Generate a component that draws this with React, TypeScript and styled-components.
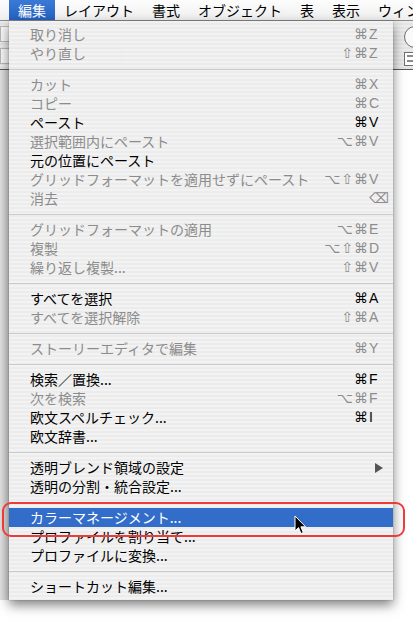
import React from 'react';
import styled, { createGlobalStyle } from 'styled-components';

const GlobalStyle = createGlobalStyle`
    html, body {
        margin: 0;
        padding: 0;
        background: #ffffff;
    }
    body {
        font-family: 'Noto Sans CJK JP', 'Noto Sans', sans-serif;
    }
`;

type Entry =
    | 'sep'
    | {
          label: string;
          mods?: string;
          keyName?: string;
          disabled?: boolean;
          submenu?: boolean;
          active?: boolean;
      };

const menuTitles = ['編集', 'レイアウト', '書式', 'オブジェクト', '表', '表示', 'ウィンドウ'];

const entries: Entry[] = [
    { label: '取り消し', mods: '⌘', keyName: 'Z', disabled: true },
    { label: 'やり直し', mods: '⇧⌘', keyName: 'Z', disabled: true },
    'sep',
    { label: 'カット', mods: '⌘', keyName: 'X', disabled: true },
    { label: 'コピー', mods: '⌘', keyName: 'C', disabled: true },
    { label: 'ペースト', mods: '⌘', keyName: 'V' },
    { label: '選択範囲内にペースト', mods: '⌥⌘', keyName: 'V', disabled: true },
    { label: '元の位置にペースト' },
    { label: 'グリッドフォーマットを適用せずにペースト', mods: '⌥⇧⌘', keyName: 'V', disabled: true },
    { label: '消去', keyName: '⌫', disabled: true },
    'sep',
    { label: 'グリッドフォーマットの適用', mods: '⌥⌘', keyName: 'E', disabled: true },
    { label: '複製', mods: '⌥⇧⌘', keyName: 'D', disabled: true },
    { label: '繰り返し複製...', mods: '⇧⌘', keyName: 'V', disabled: true },
    'sep',
    { label: 'すべてを選択', mods: '⌘', keyName: 'A' },
    { label: 'すべてを選択解除', mods: '⇧⌘', keyName: 'A', disabled: true },
    'sep',
    { label: 'ストーリーエディタで編集', mods: '⌘', keyName: 'Y', disabled: true },
    'sep',
    { label: '検索／置換...', mods: '⌘', keyName: 'F' },
    { label: '次を検索', mods: '⌥⌘', keyName: 'F', disabled: true },
    { label: '欧文スペルチェック...', mods: '⌘', keyName: 'I' },
    { label: '欧文辞書...' },
    'sep',
    { label: '透明ブレンド領域の設定', submenu: true },
    { label: '透明の分割・統合設定...' },
    'sep',
    { label: 'カラーマネージメント...', active: true },
    { label: 'プロファイルを割り当て...' },
    { label: 'プロファイルに変換...' },
    'sep',
    { label: 'ショートカット編集...' },
];

export default function App() {
    return (
        <>
            <GlobalStyle />
            <StyledScreen>
                <StyledMenuBar>
                    {menuTitles.map((title, i) => (
                        <StyledMenuTitle key={title} $open={i === 0}>
                            {title}
                        </StyledMenuTitle>
                    ))}
                </StyledMenuBar>

                <StyledToolbar>
                    <StyledToolGroup>
                        <StyledField />
                        <StyledField />
                    </StyledToolGroup>
                    <StyledToolEdge>
                        <StyledRoundButton />
                        <StyledGridButton>
                            <span />
                            <span />
                        </StyledGridButton>
                    </StyledToolEdge>
                </StyledToolbar>

                <StyledWorkspace>
                    <StyledGutter />
                    <StyledCanvas />
                </StyledWorkspace>

                <StyledDropdown>
                    {entries.map((entry, i) =>
                        entry === 'sep' ? (
                            <StyledSeparator key={i} />
                        ) : (
                            <StyledItem key={i} $disabled={entry.disabled} $active={entry.active}>
                                <StyledLabel>{entry.label}</StyledLabel>
                                {entry.keyName && (
                                    <StyledShortcut>
                                        <StyledMods>{entry.mods}</StyledMods>
                                        <StyledKey $wide={entry.keyName === '⌫'}>{entry.keyName}</StyledKey>
                                    </StyledShortcut>
                                )}
                                {entry.submenu && (
                                    <StyledArrow viewBox="0 0 8 10">
                                        <path d="M0 0 L8 5 L0 10 Z" />
                                    </StyledArrow>
                                )}
                            </StyledItem>
                        )
                    )}
                </StyledDropdown>

                <StyledFocusRing />

                <StyledCursor viewBox="0 0 13 20">
                    <path
                        d="M1 1 L1 16 L4.5 12.6 L7 18.5 L9.3 17.5 L6.9 11.8 L11.6 11.8 Z"
                        fill="#000"
                        stroke="#fff"
                        strokeWidth="1"
                        strokeLinejoin="round"
                    />
                </StyledCursor>
            </StyledScreen>
        </>
    );
}

const StyledScreen = styled.div`
    position: relative;
    display: flex;
    flex-direction: column;
    width: 413px;
    height: 622px;
    overflow: hidden;
    background: #ffffff;
`;

const StyledMenuBar = styled.div`
    display: flex;
    align-items: stretch;
    height: 20px;
    padding-left: 9px;
    background: linear-gradient(#fdfdfd, #efefef);
    border-bottom: 1px solid #8c8c8c;
    white-space: nowrap;
`;

const StyledMenuTitle = styled.div<{ $open?: boolean }>`
    display: flex;
    align-items: center;
    flex: none;
    padding: 0 9px;
    font-size: 14px;
    line-height: 20px;
    color: ${({ $open }) => ($open ? '#ffffff' : '#000000')};
    background: ${({ $open }) => ($open ? 'linear-gradient(#3a7ad6, #2461c2)' : 'transparent')};
`;

const StyledToolbar = styled.div`
    display: flex;
    justify-content: space-between;
    height: 48px;
    background: repeating-linear-gradient(#ececec 0 2px, #e4e4e4 2px 4px);
    border-bottom: 1px solid #5a5a5a;
`;

const StyledToolGroup = styled.div`
    display: flex;
    flex-direction: column;
    gap: 6px;
    padding: 5px 0 0 0;
`;

const StyledField = styled.div`
    width: 120px;
    height: 14px;
    border: 1px solid #b8b8b8;
    background: #f8f8f8;
`;

const StyledToolEdge = styled.div`
    display: flex;
    flex-direction: column;
    align-items: flex-start;
    gap: 4px;
    width: 9px;
    padding-top: 5px;
    overflow: hidden;
`;

const StyledRoundButton = styled.div`
    flex: none;
    width: 20px;
    height: 20px;
    border: 1px solid #6e6e6e;
    border-radius: 50%;
    background: #fafafa;
`;

const StyledGridButton = styled.div`
    flex: none;
    display: flex;
    flex-direction: column;
    gap: 3px;
    width: 12px;
    height: 14px;
    padding: 2px;
    box-sizing: border-box;
    border: 1px solid #6e6e6e;
    background: #ffffff;
    span {
        display: block;
        height: 2px;
        background: #8a8a8a;
    }
`;

const StyledWorkspace = styled.div`
    display: flex;
    flex: 1;
`;

const StyledGutter = styled.div`
    width: 9px;
    height: 530px;
    background: linear-gradient(90deg, #e2e2e2, #d2d2d2);
`;

const StyledCanvas = styled.div`
    flex: 1;
    background: #ffffff;
`;

const StyledDropdown = styled.div`
    position: absolute;
    top: 21px;
    left: 9px;
    width: 384px;
    padding: 4px 0;
    background: repeating-linear-gradient(rgba(242, 242, 242, 0.96) 0 2px, rgba(235, 235, 235, 0.96) 2px 4px);
    box-shadow: 0 5px 11px rgba(0, 0, 0, 0.5), 0 0 1px rgba(0, 0, 0, 0.4);
`;

const StyledItem = styled.div<{ $disabled?: boolean; $active?: boolean }>`
    display: flex;
    align-items: center;
    height: 19px;
    padding: 0 12px 0 21px;
    font-size: 14px;
    line-height: 19px;
    white-space: nowrap;
    color: ${({ $disabled, $active }) => ($active ? '#ffffff' : $disabled ? '#8c8c8c' : '#000000')};
    background: ${({ $active }) => ($active ? '#326dca' : 'transparent')};
`;

const StyledLabel = styled.span`
    flex: 1;
`;

const StyledShortcut = styled.span`
    display: flex;
    align-items: center;
    font-family: 'Liberation Sans', 'DejaVu Sans', sans-serif;
    font-size: 14px;
`;

const StyledMods = styled.span`
    font-family: 'DejaVu Sans', sans-serif;
    font-size: 14px;
    letter-spacing: 1px;
    text-align: right;
`;

const StyledKey = styled.span<{ $wide?: boolean }>`
    width: 12px;
    margin-left: ${({ $wide }) => ($wide ? '3px' : '0')};
    font-family: ${({ $wide }) => ($wide ? "'DejaVu Sans', sans-serif" : "'Liberation Sans', sans-serif")};
    overflow: visible;
`;

const StyledArrow = styled.svg`
    width: 8px;
    height: 10px;
    margin-right: -2px;
    fill: #555555;
`;

const StyledSeparator = styled.div`
    height: 12px;
    background: linear-gradient(#cbcbcb, #cbcbcb) center / 100% 1px no-repeat;
`;

const StyledFocusRing = styled.div`
    position: absolute;
    top: 502px;
    left: 2px;
    width: 399px;
    height: 31px;
    border: 2px solid #ef3a3a;
    border-radius: 9px;
    pointer-events: none;
`;

const StyledCursor = styled.svg`
    position: absolute;
    top: 515px;
    left: 294px;
    width: 13px;
    height: 20px;
`;
